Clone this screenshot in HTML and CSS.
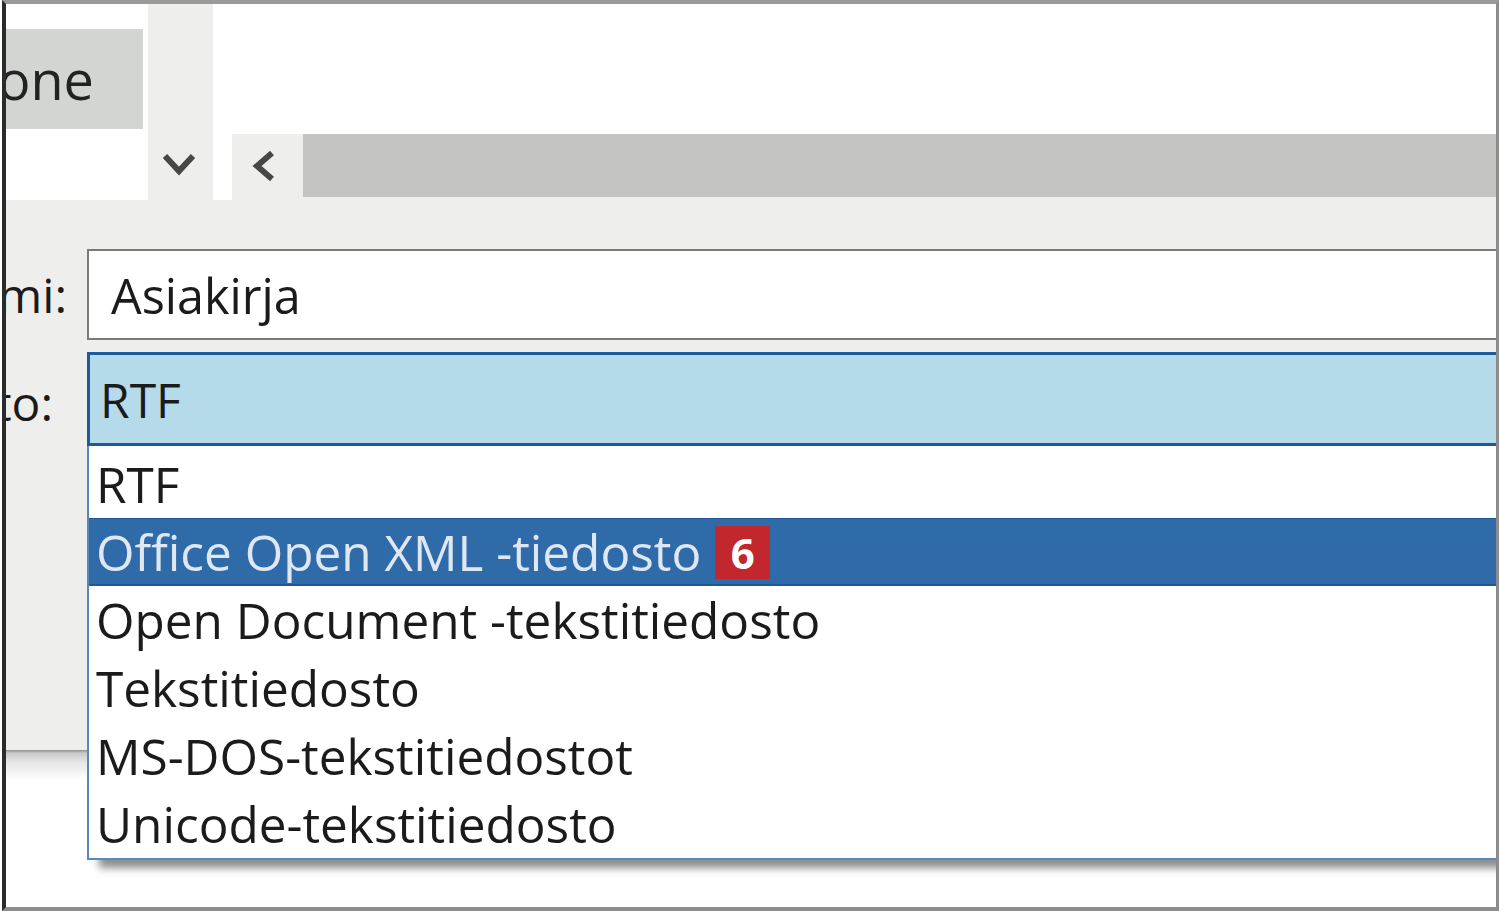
FILE: index.html
```html
<!DOCTYPE html>
<html>
<head>
	<title>Tallenna nimellä</title>
	<link rel="stylesheet" href="styles.css">
</head>
<body>

<div class="frame">
	<div class="top">
		<div class="nav">
			<div class="navItem">one</div>
		</div>
		<div class="navScroll">
			<svg class="icon" width="34" height="26" viewBox="0 0 34 26"><polyline points="3,4 17,19 31,4" fill="none" stroke="#474747" stroke-width="6"/></svg>
		</div>
		<div class="gap"></div>
		<div class="view">
			<div class="viewContent"></div>
			<div class="hscroll">
				<div class="hscrollBtn">
					<svg class="icon" width="27" height="32" viewBox="0 0 27 32"><polyline points="22,3 7,16 22,29" fill="none" stroke="#474747" stroke-width="6"/></svg>
				</div>
				<div class="hscrollThumb"></div>
			</div>
		</div>
	</div>

	<div class="form">
		<div class="row">
			<div class="label labelName">mi:</div>
			<div class="input">Asiakirja</div>
		</div>
		<div class="row">
			<div class="label labelType">to:</div>
			<div class="combo">
				RTF
				<ul class="list">
					<li>RTF</li>
					<li class="selected">Office Open XML -tiedosto <span class="badge">6</span></li>
					<li>Open Document -tekstitiedosto</li>
					<li>Tekstitiedosto</li>
					<li>MS-DOS-tekstitiedostot</li>
					<li>Unicode-tekstitiedosto</li>
				</ul>
			</div>
		</div>
	</div>

	<div class="lower"></div>
</div>

</body>
</html>
```

FILE: styles.css
```css
body {
	margin: 0;
	background: #fff;
	font-family: "Open Sans", "Noto Sans", sans-serif;
	font-size: 48px;
	color: #1b1b1b;
}
.frame {
	margin-left: 2px;
	width: 1497px;
	height: 911px;
	box-sizing: border-box;
	border-top: 4px solid #9a9a9a;
	border-bottom: 4px solid #8e8e8e;
	border-left: 4px solid #2b2b2b;
	border-right: 3px solid #8c8c8c;
	overflow: hidden;
	display: flex;
	flex-direction: column;
}
.icon {
	display: block;
}
.top {
	display: flex;
	height: 196px;
	flex-shrink: 0;
}
.nav {
	width: 142px;
	background: #fff;
	padding-top: 25px;
	box-sizing: border-box;
}
.navItem {
	width: 137px;
	height: 100px;
	background: #d3d5d3;
	font-size: 54px;
	line-height: 100px;
	text-indent: -8px;
	overflow: hidden;
	white-space: nowrap;
	color: #222;
}
.navScroll {
	width: 65px;
	background: #eeeeec;
	padding: 148px 0 0 14px;
	box-sizing: border-box;
}
.gap {
	width: 19px;
	background: #fff;
}
.view {
	flex: 1;
	display: flex;
	flex-direction: column;
	background: #eeeeec;
}
.viewContent {
	height: 130px;
	background: #fff;
}
.hscroll {
	height: 63px;
	display: flex;
}
.hscrollBtn {
	width: 71px;
	background: #eeeeec;
	padding: 16px 0 0 18px;
	box-sizing: border-box;
}
.hscrollThumb {
	flex: 1;
	background: #c3c4c2;
}
.form {
	height: 550px;
	flex-shrink: 0;
	background: #eeeeec;
	padding-top: 49px;
	box-sizing: border-box;
}
.row {
	display: flex;
	margin-bottom: 12px;
}
.label {
	width: 81px;
	flex-shrink: 0;
	display: flex;
	align-items: center;
	justify-content: flex-end;
	overflow: hidden;
	white-space: nowrap;
	box-sizing: border-box;
}
.labelName {
	padding-right: 20px;
}
.labelType {
	padding-right: 34px;
	padding-top: 6px;
}
.input {
	flex: 1;
	height: 91px;
	box-sizing: border-box;
	background: #fff;
	border: 2px solid #7a7a7a;
	border-right: none;
	padding-left: 22px;
	display: flex;
	align-items: center;
	font-size: 48.5px;
}
.combo {
	flex: 1;
	position: relative;
	height: 94px;
	box-sizing: border-box;
	background: #b5dbea;
	border: 3px solid #1c5a9b;
	border-right: none;
	padding-left: 10px;
	display: flex;
	align-items: center;
}
.list {
	position: absolute;
	top: 91px;
	left: -3px;
	width: 1420px;
	margin: 0;
	padding: 4px 0 0 0;
	list-style: none;
	background: #fff;
	border: 2px solid #5a87bf;
	border-top: none;
	box-shadow: 10px 10px 8px -2px rgba(0, 0, 0, 0.45);
	font-size: 49.5px;
	z-index: 2;
}
.list li {
	height: 68px;
	padding-left: 7px;
	display: flex;
	align-items: center;
	white-space: nowrap;
}
.list li.selected {
	background: #2f6ba9;
	color: #dfe8f2;
	box-shadow: inset 0 1px 0 #1f5893, inset 0 -2px 0 #1f5893;
}
.badge {
	display: inline-block;
	margin-left: 14px;
	width: 55px;
	height: 53px;
	background: #c1272d;
	color: #fff;
	font-weight: bold;
	font-size: 42px;
	line-height: 53px;
	text-align: center;
}
.lower {
	flex: 1;
	background: linear-gradient(#8f8f8f, #c8c8c8 3px, #e6e6e6 12px, #fff 30px);
}
```
